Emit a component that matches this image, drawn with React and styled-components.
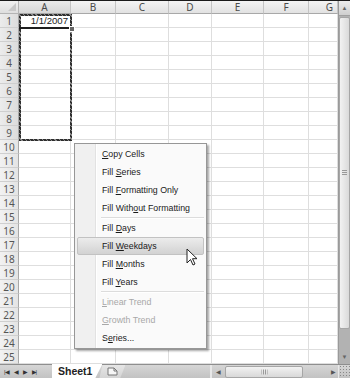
import styled, { createGlobalStyle } from "styled-components";

const Global = createGlobalStyle`
  html, body { margin: 0; padding: 0; background: #fff; }
  body { width: 350px; height: 378px; overflow: hidden; font-family: "Liberation Sans", Arial, sans-serif; }
`;

const COLS = [
  { id: "A", w: 52 },
  { id: "B", w: 45 },
  { id: "C", w: 53 },
  { id: "D", w: 43 },
  { id: "E", w: 52 },
  { id: "F", w: 45 },
  { id: "G", w: 29 },
];
const ROWS = Array.from({ length: 25 }, (_, i) => i + 1);
const TEMPLATE = `19px ${COLS.map((c) => c.w + "px").join(" ")}`;

const Window = styled.div`
  width: 350px;
  height: 378px;
  display: flex;
  flex-direction: column;
  border-top: 1px solid #1a1a1a;
  box-sizing: border-box;
  position: relative;
`;

const Body = styled.div`
  display: flex;
  height: 363px;
`;

const Sheet = styled.div`
  position: relative;
  flex: 1;
  display: grid;
  grid-template-columns: ${TEMPLATE};
  grid-template-rows: 13px repeat(25, 14px);
  overflow: hidden;
`;

const Corner = styled.div`
  background: linear-gradient(#f1f1f1, #dedede);
  border-right: 1px solid #b4b4b4;
  border-bottom: 1px solid #b4b4b4;
  position: relative;
  &::after {
    content: "";
    position: absolute;
    right: 2px;
    bottom: 2px;
    border-left: 8px solid transparent;
    border-bottom: 8px solid #c8c8c8;
  }
`;

const ColHead = styled.div`
  background: ${(p) => (p.$active ? "linear-gradient(#eaeaea, #d6d6d6)" : "linear-gradient(#f4f4f4, #e2e2e2)")};
  border-right: 1px solid #c4c4c4;
  border-bottom: 1px solid #a8a8a8;
  font-family: "Noto Sans", "Liberation Sans", sans-serif;
  font-size: 10px;
  color: #4a4a4a;
  display: flex;
  align-items: center;
  justify-content: ${(p) => (p.$end ? "flex-end" : "center")};
  padding-right: ${(p) => (p.$end ? "4px" : "0")};
  line-height: 1;
`;

const RowHead = styled.div`
  background: ${(p) => (p.$active ? "linear-gradient(90deg, #ececec, #dcdcdc)" : "linear-gradient(90deg, #f2f2f2, #e4e4e4)")};
  border-right: 1px solid #a8a8a8;
  border-bottom: 1px solid #cfcfcf;
  font-family: "Noto Sans", "Liberation Sans", sans-serif;
  font-size: 10px;
  color: #555;
  display: flex;
  align-items: center;
  justify-content: center;
  line-height: 1;
`;

const Cell = styled.div`
  border-right: 1px solid #dedede;
  border-bottom: 1px solid #dedede;
  font-family: "Liberation Sans", Arial, sans-serif;
  font-size: 9.6px;
  color: #222;
  display: flex;
  align-items: center;
  justify-content: flex-end;
  padding-right: 2px;
  line-height: 1;
  white-space: nowrap;
`;

const Marquee = styled.div`
  position: absolute;
  left: 19px;
  top: 13px;
  width: 53px;
  height: 127px;
  box-sizing: border-box;
  border: 2px solid #444;
  border-image: repeating-linear-gradient(45deg, #2e2e2e 0 2px, #8a8a8a 2px 3px) 2;
  pointer-events: none;
`;

const ActiveLine = styled.div`
  position: absolute;
  left: 19px;
  top: 26px;
  width: 52px;
  height: 2px;
  background: #1e1e1e;
`;

const Handle = styled.div`
  position: absolute;
  left: 69px;
  top: 25px;
  width: 4px;
  height: 4px;
  background: #666;
  border: 1px solid #fff;
`;

const VScroll = styled.div`
  width: 11px;
  display: flex;
  flex-direction: column;
  background: #b2b2b2;
  border-left: 1px solid #9a9a9a;
`;

const ScrollArrow = styled.div`
  height: 14px;
  display: flex;
  align-items: center;
  justify-content: center;
  background: ${(p) => (p.$light ? "linear-gradient(#ececec, #cfcfcf)" : "transparent")};
  border-bottom: ${(p) => (p.$light ? "1px solid #a0a0a0" : "none")};
  font-size: 6px;
  color: #666;
`;

const VThumb = styled.div`
  height: 312px;
  margin: 1px 0 0;
  background: linear-gradient(90deg, #f2f2f2, #dadada);
  border: 1px solid #a6a6a6;
  border-radius: 2px;
  display: flex;
  align-items: center;
  justify-content: center;
  box-sizing: border-box;
`;

const Grip = styled.div`
  width: 5px;
  height: 6px;
  background: repeating-linear-gradient(#999 0 1px, transparent 1px 2px);
`;

const TabBar = styled.div`
  height: 14px;
  display: flex;
  align-items: stretch;
  background: linear-gradient(#d6d6d6, #c2c2c2);
  border-top: 1px solid #8e8e8e;
  box-sizing: border-box;
`;

const Nav = styled.div`
  display: flex;
  align-items: center;
  gap: 5px;
  padding-left: 4px;
  width: 44px;
  font-size: 6px;
  color: #333;
  letter-spacing: -1px;
`;

const Tab = styled.div`
  margin-left: 4px;
  padding: 0 10px 0 6px;
  background: #fff;
  font-family: "Liberation Sans", sans-serif;
  font-weight: bold;
  font-size: 10.5px;
  color: #222;
  display: flex;
  align-items: center;
  clip-path: polygon(0 0, 100% 0, 86% 100%, 0 100%);
  margin-top: -1px;
`;

const NewTab = styled.div`
  width: 26px;
  margin-left: -3px;
  background: linear-gradient(#e6e6e6, #d4d4d4);
  clip-path: polygon(12% 0, 100% 0, 80% 100%, 0 100%);
  display: flex;
  align-items: center;
  justify-content: center;
`;

const Spacer = styled.div`
  flex: 1;
`;

const HScroll = styled.div`
  width: 134px;
  display: flex;
  align-items: center;
  border-left: 2px solid #e8e8e8;
  padding-left: 4px;
  gap: 2px;
`;

const HThumb = styled.div`
  width: 76px;
  height: 10px;
  background: linear-gradient(#f2f2f2, #d8d8d8);
  border: 1px solid #a6a6a6;
  border-radius: 2px;
  display: flex;
  align-items: center;
  justify-content: center;
  margin-left: 2px;
`;

const Arrow = styled.span`
  font-size: 6px;
  color: #555;
`;

const SizeGrip = styled.div`
  width: 11px;
  height: 100%;
  margin-left: auto;
  border-left: 1px solid #e8e8e8;
  background: radial-gradient(circle, #888 0.7px, transparent 1px) 0 0 / 3px 3px;
`;

const Menu = styled.div`
  position: absolute;
  left: 74px;
  top: 142px;
  width: 133px;
  padding: 1px 0;
  background: linear-gradient(90deg, #f0f0f0 0, #f0f0f0 20px, #e2e2e2 20px, #e2e2e2 21px, #fff 21px, #fff 22px, #fafafa 22px);
  border: 1px solid #979797;
  box-shadow: 2px 2px 2px rgba(0, 0, 0, 0.35);
  box-sizing: border-box;
  font-family: "Liberation Sans", Arial, sans-serif;
  font-size: 8.8px;
`;

const Item = styled.div`
  height: 18px;
  margin: 0 2px;
  padding-left: 24px;
  display: flex;
  align-items: center;
  color: ${(p) => (p.$disabled ? "#a8a8a8" : "#1a1a1a")};
  background: ${(p) => (p.$hover ? "linear-gradient(#ececec, #d2d2d2)" : "transparent")};
  border: 1px solid ${(p) => (p.$hover ? "#c2c2c2" : "transparent")};
  border-radius: 2px;
  box-sizing: border-box;
  white-space: pre;
  u { text-underline-offset: 1px; }
`;

const Sep = styled.div`
  height: 1px;
  margin: 0 2px 0 26px;
  background: #dcdcdc;
  border-bottom: 1px solid #fff;
`;

const Cursor = styled.svg`
  position: absolute;
  left: 186px;
  top: 247px;
`;

const items = [
  ["", "C", "opy Cells"],
  ["Fill ", "S", "eries"],
  ["Fill ", "F", "ormatting Only"],
  ["Fill With", "o", "ut Formatting"],
  "sep",
  ["Fill ", "D", "ays"],
  ["Fill ", "W", "eekdays", "hover"],
  ["Fill ", "M", "onths"],
  ["Fill ", "Y", "ears"],
  "sep",
  ["", "L", "inear Trend", "disabled"],
  ["", "G", "rowth Trend", "disabled"],
  ["S", "e", "ries..."],
];

export default function App() {
  return (
    <Window>
      <Global />
      <Body>
        <Sheet>
          <Corner />
          {COLS.map((c) => (
            <ColHead key={c.id} $active={c.id === "A"} $end={c.id === "G"}>
              {c.id}
            </ColHead>
          ))}
          {ROWS.map((r) => [
            <RowHead key={"h" + r} $active={r <= 9}>
              {r}
            </RowHead>,
            ...COLS.map((c) => (
              <Cell key={c.id + r}>{r === 1 && c.id === "A" ? "1/1/2007" : ""}</Cell>
            )),
          ])}
          <Marquee />
          <ActiveLine />
          <Handle />
        </Sheet>
        <VScroll>
          <ScrollArrow $light>▲</ScrollArrow>
          <VThumb>
            <Grip />
          </VThumb>
          <Spacer />
          <ScrollArrow>▼</ScrollArrow>
        </VScroll>
      </Body>
      <TabBar>
        <Nav>
          <span>|◀</span>
          <span>◀</span>
          <span>▶</span>
          <span>▶|</span>
        </Nav>
        <Tab>Sheet1</Tab>
        <NewTab>
          <svg width="11" height="9" viewBox="0 0 11 9">
            <path d="M1 1h6l3 3v4H1z" fill="#f6f6f6" stroke="#777" strokeWidth="1" />
            <path d="M7 1v3h3" fill="none" stroke="#777" strokeWidth="1" />
          </svg>
        </NewTab>
        <Spacer />
        <HScroll>
          <Arrow>◀</Arrow>
          <HThumb>
            <Grip style={{ transform: "rotate(90deg)" }} />
          </HThumb>
          <Spacer />
          <Arrow>▶</Arrow>
          <SizeGrip />
        </HScroll>
      </TabBar>
      <Menu>
        {items.map((it, i) =>
          it === "sep" ? (
            <Sep key={i} />
          ) : (
            <Item key={i} $hover={it[3] === "hover"} $disabled={it[3] === "disabled"}>
              <span>
                {it[0]}
                <u>{it[1]}</u>
                {it[2]}
              </span>
            </Item>
          )
        )}
      </Menu>
      <Cursor width="12" height="18" viewBox="0 0 12 18">
        <path d="M1 1v14l3.5-3.5 2.5 5.5 2-1-2.5-5.3H11z" fill="#fff" stroke="#222" strokeWidth="1" strokeLinejoin="round" />
      </Cursor>
    </Window>
  );
}
